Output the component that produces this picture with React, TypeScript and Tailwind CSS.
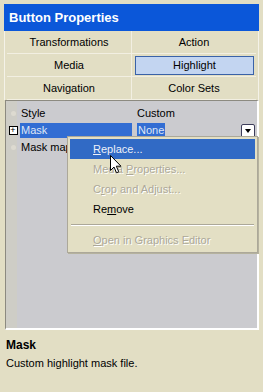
import React from 'react';

const font = "font-['Liberation_Sans',Arial,sans-serif]";

const tabs = [
  ['Transformations', 'Action'],
  ['Media', 'Highlight'],
  ['Navigation', 'Color Sets'],
];

const Cursor = () => (
  <svg width="12" height="19" viewBox="0 0 12 19" className="absolute left-[40px] top-[16px]">
    <path d="M0.5 0.5 L0.5 15.5 L4 12 L6.5 17.8 L8.8 16.8 L6.3 11.2 L11 11.2 Z" fill="#fff" stroke="#000" strokeWidth="1" />
  </svg>
);

export default function App() {
  return (
    <div className={`w-[263px] h-[392px] bg-[#e2dec4] ${font} text-[11px] text-black overflow-hidden`}>
      <div className="px-[4px] pt-[4px]">
        {/* Title */}
        <div className="h-[27px] bg-[#0b57d9] flex items-center pl-[5px] text-white font-bold text-[13px]">
          Button Properties
        </div>

        {/* Tabs */}
        <div className="border-l border-r border-[#f4f2e8] px-[2px]">
          {tabs.map((row, ri) => (
            <div key={ri} className="h-[23px] flex border-b border-[#f2efe2]">
              {row.map((t, ci) => {
                const sel = t === 'Highlight';
                return (
                  <div key={t} className={`flex-1 flex items-center justify-center ${ci === 0 ? 'border-r border-[#f2efe2]' : ''}`}>
                    {sel ? (
                      <div className="w-[119px] h-[19px] ml-[1px] bg-[#c3d5f1] border border-[#3a62a8] flex items-center justify-center">
                        {t}
                      </div>
                    ) : (
                      t
                    )}
                  </div>
                );
              })}
            </div>
          ))}
        </div>

        {/* Property grid */}
        <div className="relative h-[230px] bg-[#cbcbcf] border-t border-l border-[#8c8a80] border-r-2 border-b-2 border-r-white border-b-white ml-[1px]">
          <div className="absolute left-0 top-0 bottom-0 w-[11px] bg-[#cecdc6]" />
          <div className="relative pt-[4px]">
            <div className="h-[17px] flex items-center">
              <div className="w-[14px] flex justify-center">
                <div className="w-[5px] h-[5px] rounded-full bg-[#dddad0]" />
              </div>
              <div className="w-[116px] pl-[1px]">Style</div>
              <div className="pl-[1px]">Custom</div>
            </div>
            <div className="h-[17px] flex items-center">
              <div className="w-[14px] flex justify-center">
                <div className="w-[9px] h-[9px] border border-black bg-white flex items-center justify-center text-[9px] leading-none">+</div>
              </div>
              <div className="w-[112px] h-[15px] bg-[#326dd3] text-[#dfe6f5] flex items-center pl-[1px]">Mask</div>
              <div className="ml-[5px] h-[15px] px-[1px] bg-[#326dd3] text-[#dfe6f5] flex items-center">None</div>
              <div className="ml-auto mr-[2px] w-[14px] h-[14px] bg-white border border-[#3d3d5a] rounded-[2px] flex items-center justify-center">
                <div className="w-0 h-0 border-l-[3px] border-r-[3px] border-t-[4px] border-l-transparent border-r-transparent border-t-black" />
              </div>
            </div>
            <div className="h-[17px] flex items-center">
              <div className="w-[14px] flex justify-center">
                <div className="w-[5px] h-[5px] rounded-full bg-[#dddad0]" />
              </div>
              <div className="pl-[1px]">Mask map</div>
            </div>
          </div>

          {/* Context menu */}
          <div className="absolute left-[61px] top-[35px] w-[191px] bg-[#e3dfc4] border border-[#aca899] shadow-[1px_1px_0_#b5b29e] p-[2px]">
            <div className="relative h-[20px] bg-[#316ac5] text-[#eef1f8] flex items-center pl-[23px]">
              <span><span className="underline">R</span>eplace...</span>
              <Cursor />
            </div>
            <div className="h-[20px] flex items-center pl-[23px] text-[#aca899] [text-shadow:1px_1px_0_#fff]">
              <span>Media <span className="underline">P</span>roperties...</span>
            </div>
            <div className="h-[20px] flex items-center pl-[23px] text-[#aca899] [text-shadow:1px_1px_0_#fff]">
              <span>C<span className="underline">r</span>op and Adjust...</span>
            </div>
            <div className="h-[20px] flex items-center pl-[23px]">
              <span>Re<span className="underline">m</span>ove</span>
            </div>
            <div className="h-[11px] flex items-center px-[1px]">
              <div className="w-full border-t border-[#aca899] border-b border-b-white" />
            </div>
            <div className="h-[20px] flex items-center pl-[23px] text-[#aca899] [text-shadow:1px_1px_0_#fff]">
              <span><span className="underline">O</span>pen in Graphics Editor</span>
            </div>
          </div>
        </div>

        {/* Description */}
        <div className="pl-[2px] pt-[8px]">
          <div className="font-bold text-[12px] leading-[14px]">Mask</div>
          <div className="mt-[5px] leading-[13px]">Custom highlight mask file.</div>
        </div>
      </div>
    </div>
  );
}
